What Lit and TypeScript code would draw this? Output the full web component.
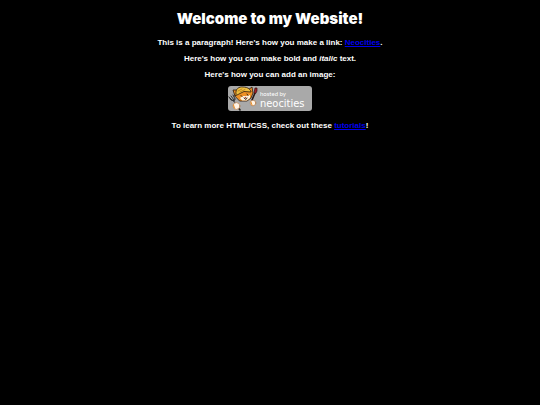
import { LitElement, html, css, svg } from "lit";
import { customElement } from "lit/decorators.js";

const mascot = svg`
  <g stroke-linecap="round" stroke-linejoin="round">
    <path d="M1 11 5 15M3 10 6 14M5 9 7 13M1 11 3 14 6 15 7 13M5 14 8 18" fill="none" stroke="#333" stroke-width="1"/>
    <path d="M24 14 27 7" stroke="#241515" stroke-width="1.600"/>
    <path d="M26 7 27 2 29 2 29 5 28 7Z" fill="#a3202a" stroke="#351010" stroke-width=".7"/>
    <path d="M7 10 5 4 8 4 20 4 24 1 25 7 23 12 19 15 12 15Z" fill="#ee9126" stroke="#2b1b0c" stroke-width=".8"/>
    <path d="M12 12 15 10 18 10 22 9 22 12 19 14.500 14 14.500Z" fill="#fff2dc"/>
    <path d="M8 8C7 3 11 .5 15 1 20 1 23 4 23 6L16 5.500 11 8 7 10Z" fill="#f0c040" stroke="#2b1b0c" stroke-width=".8"/>
    <path d="M10 5 14 3M12 6 17 3.500" stroke="#a96e12" stroke-width=".7"/>
    <path d="M13 9.500 14 10.500M19 8 20 9.500M16 12 18 13.500 19 12" fill="none" stroke="#2b1b0c" stroke-width=".9"/>
    <circle cx="17.500" cy="11.500" r=".8" fill="#b64437"/>
    <path d="M10 21 12 24" stroke="#222" stroke-width="1.600"/>
    <circle cx="8.500" cy="20" r="3.400" fill="#fff4e6" stroke="#a96a32" stroke-width=".6"/>
    <circle cx="25" cy="17" r="2.800" fill="#fff4e6" stroke="#a96a32" stroke-width=".6"/>
    <path d="M5.500 19 6.500 22M23 16 24 19" stroke="#ee9126" stroke-width="1"/>
  </g>`;

@customElement("app-root")
export class AppRoot extends LitElement {
  static styles = css`
    :host {
      display: block;
      min-height: 100vh;
      background: #000;
      color: #fff;
      font-family: "Liberation Sans", Arial, sans-serif;
      font-weight: 900;
      font-size: 8px;
      line-height: 10px;
      text-align: center;
    }
    main {
      display: flex;
      flex-direction: column;
      align-items: center;
      gap: 6px;
      padding: 9px 8px 0;
    }
    h1 {
      margin: 0 0 3px;
      font-family: Inter, sans-serif;
      font-size: 15px;
      line-height: 20px;
      font-weight: 900;
    }
    p {
      margin: 0;
    }
    a {
      color: #00e;
    }
    .badge {
      display: block;
      width: 84px;
      height: 25px;
      margin-bottom: 4px;
    }
    .badge svg {
      display: block;
      width: 100%;
      height: 100%;
    }
    .badge text {
      font-weight: 400;
      fill: #fff;
    }
    .small {
      font-family: Lato, sans-serif;
      font-size: 6px;
    }
    .name {
      font-family: "DejaVu Sans Condensed", "DejaVu Sans", sans-serif;
      font-size: 11px;
    }
  `;

  render() {
    return html`
      <main>
        <h1>Welcome to my Website!</h1>
        <p>This is a paragraph! Here's how you make a link: <a href="#neocities">Neocities</a>.</p>
        <p>Here's how you can make <b>bold</b> and <em>italic</em> text.</p>
        <p>Here's how you can add an image:</p>
        <div class="badge">
          <svg viewBox="0 0 84 25" role="img" aria-label="hosted by neocities">
            <rect width="84" height="25" rx="3" fill="#a9a9a9" />
            ${mascot}
            <text class="small" x="32" y="10">hosted by</text>
            <text class="name" x="32" y="21">neocities</text>
          </svg>
        </div>
        <p>To learn more HTML/CSS, check out these <a href="#tutorials">tutorials</a>!</p>
      </main>
    `;
  }
}
